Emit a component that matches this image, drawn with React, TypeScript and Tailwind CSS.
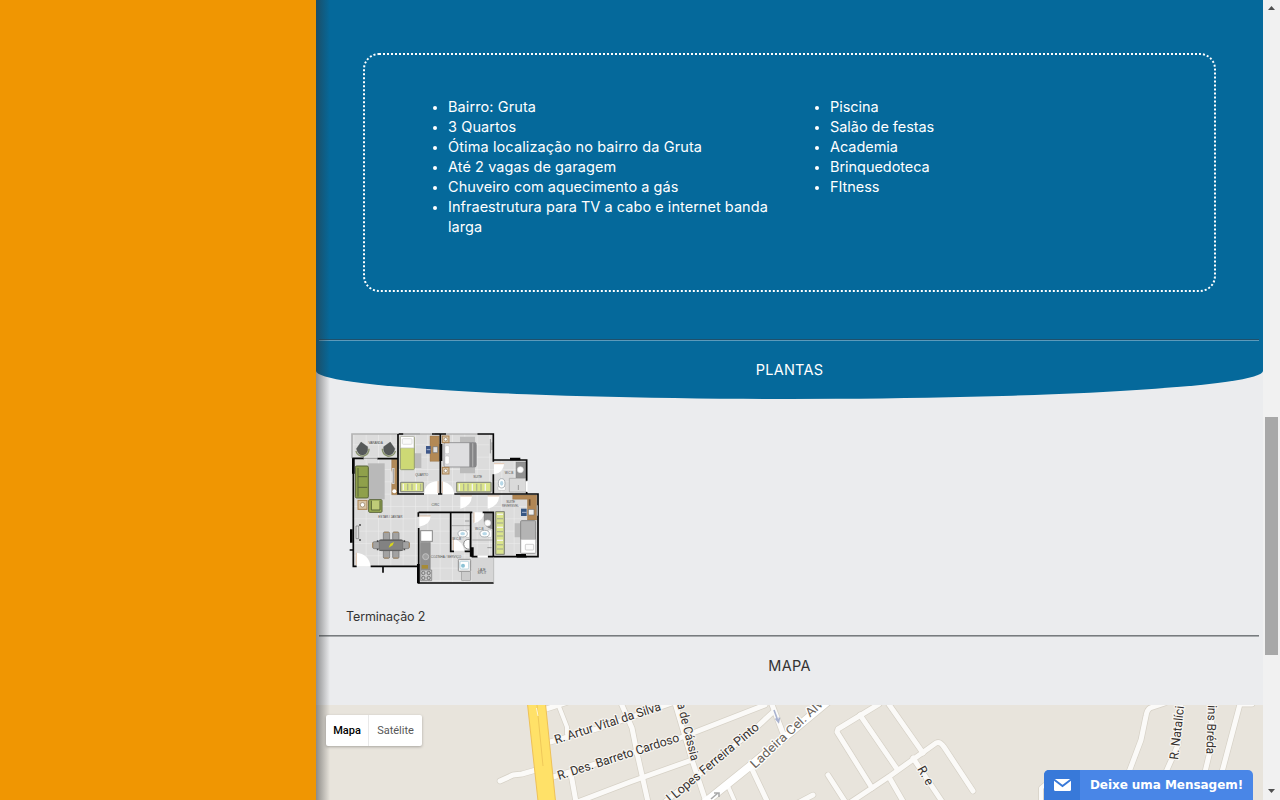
import React from "react";

const left = [
  { t: "Bairro: Gruta", w: "tracking-[0.1px]" },
  { t: "3 Quartos", w: "tracking-[0.1px]" },
  { t: "Ótima localização no bairro da Gruta", w: "tracking-[0.11px]" },
  { t: "Até 2 vagas de garagem", w: "tracking-[0.06px]" },
  { t: "Chuveiro com aquecimento a gás", w: "tracking-[0.04px]" },
  { t: "Infraestrutura para TV a cabo e internet banda larga", w: "tracking-[0.04px]" },
];
const right = ["Piscina", "Salão de festas", "Academia", "Brinquedoteca", "FItness"];

const roads: [string, number][] = [
  ["M546 709L568 702", 5],
  ["M558 704L567 727V734", 4],
  ["M550 742L600 728L672 703", 5],
  ["M553 777L680 738L765 705", 5],
  ["M500 781L513 775L522 774L536 770", 5],
  ["M571 774L576 802", 5],
  ["M575 803L630 782L692 760", 5],
  ["M621 703L632 728L637 753L648 802", 5],
  ["M675 703L692 760L706 802", 5],
  ["M660 806L758 726L773 712", 5],
  ["M771 702L784 736", 5],
  ["M750 765L768 803", 5],
  ["M728 786L735 802", 4],
  ["M879 704L838 729L837 732L872 788", 5],
  ["M860 715L897 769", 5],
  ["M888 703L923 753", 5],
  ["M851 802L890 776L936 743Q940 741 944 747L973 791", 5],
  ["M913 758L943 803", 5],
  ["M889 777L904 803", 5],
  ["M828 775L846 803", 5],
  ["M796 804L813 795", 5],
  ["M1165 703L1150 708Q1147 710 1146 716L1141 740L1129 772", 5],
  ["M1181 703L1178 745L1166 772", 5],
  ["M1212 703L1211 747L1205 772", 5],
  ["M1252 704H1240L1222 772", 5],
  ["M1041 803V788L1047 783", 4],
];

const labels: [string, number, number, number, number][] = [
  ["R. Artur Vital da Silva", 556, 744, -17.8, 111],
  ["R. Des. Barreto Cardoso", 559, 780, -17.8, 127],
  ["a de Cássia", 677, 704, 76, 59],
  ["l Lopes Ferreira Pinto", 671, 803, -40, 116],
  ["R. e", 917, 769, 60, 20],
  ["R. Natalíci", 1178, 760, -83.5, 54],
  ["ins Bréda", 1208, 705, 92, 49],
];

function StreetMap() {
  return (
    <svg className="block h-full w-full" viewBox="316 705 947 95">
      <rect x="316" y="705" width="947" height="95" fill="#e8e4dc" />
      <g fill="none" strokeLinejoin="round" strokeLinecap="round">
        {roads.map(([d, w]) => (
          <path key={d} d={d} stroke="#d6d1c6" strokeWidth={w + 1.4} />
        ))}
        <path d="M704 803L750 766L832 698" stroke="#d6d1c6" strokeWidth="9" />
        {roads.map(([d, w]) => (
          <path key={d} d={d} stroke="#fbfaf8" strokeWidth={w} />
        ))}
        <path d="M704 803L750 766L832 698" stroke="#fff" strokeWidth="7.5" />
      </g>
      <path d="M527.5 704H545.5L555.5 801H538Z" fill="#ffe168" stroke="#eec157" />
      <path d="M537 705L543 766" stroke="#efc85a" />
      <path d="M536.5 708L538 716" stroke="#fff7d8" />
      <path d="M774 710L778 721M775.5 718.500L778.500 722L779.500 717.500" stroke="#a9b2cf" strokeWidth="1.6" fill="none" />
      <path d="M711 799L718 793M714 793H719V797" stroke="#aaa" strokeWidth="1.6" fill="none" />
      <g fontFamily="Roboto, sans-serif" fontSize="12.500" paintOrder="stroke" stroke="#f7f5f1" strokeWidth="2.500" strokeLinejoin="round">
        {labels.map(([t, x, y, r, len]) => (
          <text key={t} transform={`translate(${x} ${y}) rotate(${r})`} textLength={len} lengthAdjust="spacingAndGlyphs" fill="#35302d">{t}</text>
        ))}
        <text transform="translate(755 769) rotate(-43)" textLength="94" lengthAdjust="spacingAndGlyphs" fill="#6b645c" stroke="#fff">Ladeira Cel. Alv</text>
      </g>
    </svg>
  );
}

function Chair({ x, y, r }: { x: number; y: number; r: number }) {
  return (
    <g transform={`translate(${x} ${y}) rotate(${r})`}>
      <path d="M-20 2Q-18 18 0 21Q18 18 20 2" fill="none" stroke="#86906a" strokeWidth="4" />
      <path d="M0-22L17-5Q16 16 0 17Q-16 16-17-5Z" fill="#555858" stroke="#3f4341" />
    </g>
  );
}

function Wardrobe({ x, y, w, h }: { x: number; y: number; w: number; h: number }) {
  const vertical = h > w;
  const n = Math.floor((vertical ? h : w) / 13);
  return (
    <g>
      <rect x={x} y={y} width={w} height={h} rx="2" fill="#dbe58c" stroke="#8d9082" strokeWidth="4" />
      {Array.from({ length: n }, (_, i) =>
        vertical ? (
          <path key={i} d={`M${x + 4} ${y + 8 + i * 13}h${w - 8}`} stroke={i % 3 ? "#b0b692" : "#f4f3ef"} strokeWidth="4" />
        ) : (
          <path key={i} d={`M${x + 8 + i * 13} ${y + 4}v${h - 8}`} stroke={i % 3 ? "#b0b692" : "#f4f3ef"} strokeWidth="4" />
        )
      )}
    </g>
  );
}

function Lamp({ x, y, s }: { x: number; y: number; s: number }) {
  return (
    <g>
      <rect x={x} y={y} width={s} height={s} fill="#d9c4a5" stroke="#a98252" strokeWidth="3" />
      <circle cx={x + s / 2} cy={y + s / 2} r={s / 4} fill="#fff" stroke="#8d7558" strokeWidth="2" />
    </g>
  );
}

function Toilet({ x, y, r }: { x: number; y: number; r: number }) {
  return (
    <g transform={`translate(${x} ${y}) rotate(${r})`}>
      <rect x="-11" y="6" width="22" height="12" rx="3" fill="#fff" stroke="#999" />
      <ellipse cx="0" cy="-3" rx="10" ry="14" fill="#fff" stroke="#8d9499" strokeWidth="2" />
      <ellipse cx="0" cy="-3" rx="5" ry="7" fill="#b7d8e8" />
    </g>
  );
}

function FloorPlan() {
  return (
    <svg className="block h-[170px] w-[210px]" viewBox="0 0 630 510">
      <defs>
        <pattern id="tile" width="37" height="37" patternUnits="userSpaceOnUse" x="40" y="24">
          <rect width="37" height="37" fill="#dcdcdc" />
          <path d="M0 0H37M0 0V37" stroke="#efefef" strokeWidth="3" />
        </pattern>
      </defs>
      <path d="M36 30H460V108H560V210H592V397H460V476H236V427H36Z" fill="url(#tile)" />
      <path d="M395 400H460V476H395Z" fill="#d6d6d6" />
      <path d="M36 103V30H176" fill="none" stroke="#b3b3b3" strokeWidth="5" />
      <path d="M176 30H240M285 30H300" stroke="#bbb" strokeWidth="4" />
      <path d="M84 118H134V226H84Z" fill="#b9b9b9" />
      <path d="M222 88H244V132H222ZM360 38H405V148H360ZM524 298H545V340H524Z" fill="#bbb" />

      <Chair x={67} y={76} r={-10} />
      <Chair x={147} y={76} r={10} />

      <g stroke="#576238" strokeWidth="3" fill="#8fa04b">
        <rect x="46" y="126" width="39" height="96" rx="4" />
        <path d="M54 132V218M54 158H82M54 190H82" />
        <rect x="86" y="227" width="40" height="38" rx="3" fill="#9cae55" />
        <path d="M94 230V258H120V230" fill="#bfcb78" />
      </g>
      <Lamp x={54} y={229} s={27} />
      <path d="M155 106H172V212H155V180L162 160L155 138Z" fill="#b18a59" stroke="#8d6b42" />
      <path d="M160 132V180" stroke="#e4e4e4" strokeWidth="7" />
      <path d="M160 134V178" stroke="#777" strokeWidth="2" />
      <circle cx="163" cy="202" r="6" fill="#fff" />

      <rect x="181" y="38" width="42" height="99" rx="3" fill="#cdd975" stroke="#949d73" strokeWidth="3" />
      <rect x="182" y="38" width="40" height="34" fill="#fff" stroke="#bbb" strokeWidth="2" />
      <rect x="187" y="44" width="29" height="17" rx="3" fill="#fafafa" stroke="#d0d0d0" strokeWidth="2" />
      <path d="M270 36H298V112H270Z" fill="#b38955" stroke="#8d6b42" />
      <path d="M279 68H293V86H279Z" fill="#dedede" stroke="#707070" strokeWidth="2" />
      <path d="M258 66H272V89H258Z" fill="#3e5789" />
      <path d="M260 77H271" stroke="#a8b6d2" strokeWidth="3" />
      <Wardrobe x={182} y={175} w={68} h={28} />
      <Wardrobe x={350} y={175} w={103} h={29} />

      <rect x="312" y="56" width="97" height="73" rx="5" fill="#dedee0" stroke="#969698" strokeWidth="3" />
      <rect x="388" y="56" width="20" height="73" fill="#858587" />
      <path d="M398 58V128" stroke="#aaa" strokeWidth="4" />
      <rect x="315" y="65" width="13" height="24" rx="4" fill="#fff" stroke="#aaa" />
      <rect x="315" y="96" width="13" height="24" rx="4" fill="#fff" stroke="#aaa" />
      <Lamp x={307} y={36} s={20} />
      <Lamp x={307} y={130} s={20} />
      <path d="M451 45V88M456 55V78" stroke="#999" strokeWidth="3" />

      <rect x="528" y="114" width="31" height="48" fill="#929292" stroke="#707070" />
      <circle cx="541" cy="137" r="9" fill="#fff" stroke="#ddd" strokeWidth="2" />
      <Toilet x={485} y={181} r={0} />
      <path d="M508 204V163H558V204Z" fill="#dadada" stroke="#a0a0a0" strokeWidth="2" />
      <path d="M535 183V198" stroke="#999" strokeWidth="3" />

      <path d="M518 213H590V288H562V226H518Z" fill="#b18654" stroke="#886640" />
      <path d="M569 226V245" stroke="#62492e" strokeWidth="5" />
      <rect x="565" y="256" width="17" height="17" fill="#eee" stroke="#777" strokeWidth="2" />
      <rect x="543" y="254" width="17" height="22" fill="#375783" />
      <path d="M546 265H560" stroke="#a8b6d2" strokeWidth="3" />
      <rect x="542" y="290" width="45" height="98" rx="3" fill="#b4b4b4" stroke="#8a8a8a" strokeWidth="3" />
      <rect x="543" y="347" width="43" height="40" fill="#fff" stroke="#c5c5c5" strokeWidth="2" />
      <rect x="556" y="361" width="25" height="17" rx="2" fill="#fafafa" stroke="#bbb" strokeWidth="2" />
      <Wardrobe x={467} y={263} w={26} h={128} />

      <path d="M432 266H458V315Q432 310 432 290Z" fill="#929292" stroke="#777" />
      <circle cx="443" cy="297" r="9" fill="#fff" stroke="#ddd" strokeWidth="2" />
      <Toilet x={437} y={329} r={-90} />
      <Toilet x={371} y={329} r={-90} />
      <path d="M390 346Q371 345 371 361Q373 376 390 376Z" fill="#fff" stroke="#8b8b8b" strokeWidth="3" />
      <path d="M335 305H390M397 348H458" stroke="#aaa" strokeWidth="3" />
      <path d="M375 291H388M442 371H455" stroke="#999" strokeWidth="3" />

      <g stroke="#6d6d6d" strokeWidth="2" fill="#a2a2a2">
        <rect x="130" y="324" width="19" height="25" rx="4" /><rect x="158" y="324" width="19" height="25" rx="4" />
        <rect x="130" y="377" width="19" height="26" rx="4" /><rect x="158" y="377" width="19" height="26" rx="4" />
        <rect x="98" y="353" width="24" height="21" rx="5" /><rect x="184" y="353" width="24" height="21" rx="5" />
        <rect x="118" y="347" width="70" height="33" rx="5" fill="#828282" />
      </g>
      <path d="M132 325H146M160 325H175M132 402H146M160 402H175M98 356V371M208 356V371" stroke="#aa8c64" strokeWidth="3" />
      <path d="M118 349H188M118 379H188" stroke="#5c5c5c" strokeWidth="3" />
      <path d="M113 349V354M113 374V379M193 349V354M193 374V379" stroke="#444" strokeWidth="5" />
      <path d="M146 371L151 359L162 354L158 364Z" fill="#d8d51d" />
      <path d="M48 306H56V344H48Z" fill="#ddd" stroke="#777" strokeWidth="2" />
      <path d="M60 300V306M60 345V351" stroke="#333" strokeWidth="4" />

      <rect x="242" y="320" width="35" height="32" fill="#fff" stroke="#888" strokeWidth="3" />
      <path d="M241 355H271V437H241Z" fill="#8f8f8f" stroke="#6f6f6f" />
      <circle cx="257" cy="398" r="9" fill="#a2a2a2" stroke="#c2c2c2" strokeWidth="3" />
      <path d="M245 423H264V434H245Z" fill="#a68b36" />
      <path d="M242 438H275V470H242Z" fill="#c7c7c7" stroke="#777" strokeWidth="2" />
      <g fill="none" stroke="#777" strokeWidth="3">
        <circle cx="250" cy="447" r="5" /><circle cx="266" cy="447" r="5" /><circle cx="250" cy="462" r="5" /><circle cx="266" cy="462" r="5" />
      </g>
      <rect x="355" y="406" width="37" height="36" rx="3" fill="#eee" stroke="#8e8e8e" strokeWidth="3" />
      <rect x="360" y="412" width="26" height="23" rx="4" fill="#fff" stroke="#9dc6d3" strokeWidth="2" />
      <circle cx="369" cy="425" r="6" fill="#8cc3d6" />
      <rect x="365" y="443" width="26" height="26" fill="#ccc" stroke="#999" strokeWidth="2" />

      <g fill="#fff">
        <path d="M49 427V386Q86 389 92 427Z" />
        <path d="M253 210Q254 174 294 171V210Z" />
        <path d="M307 210V172Q340 180 343 210Z" />
        <path d="M361 254V216H396Q394 248 361 254Z" />
        <path d="M443 254V216H478Q475 248 443 254Z" />
        <path d="M462 151V117H493Q490 147 462 151Z" />
        <path d="M238 308V276H272Q271 302 238 308Z" />
        <path d="M402 298V265H433Q430 291 402 298Z" />
        <path d="M340 380V345Q370 352 373 380Z" />
      </g>
      <path d="M49 386V423M294 171V207M307 172V207M361 216H396M443 216H478M462 119H493M238 276H272M402 265V296M340 345V378" stroke="#d0a684" strokeWidth="2" />

      <g stroke="#080808" strokeWidth="5" fill="none">
        <path d="M37 103H72M112 104H176M40 103V427H50M92 427H236M174 30V210H252M176 30H190M276 30H301V171M301 30V210M294 210H307M301 30H318M412 30H460V113M460 108H560V170M560 204V210M460 151V208M343 210H594V398H530" />
        <path d="M236 265H332M332 265H397M332 265V382H342M374 382H392M392 265V398M428 265H460V398M235 265V278M236 312V477H461M395 398H413M444 398H560M129 427V446M29 378H40" />
      </g>
      <path d="M70 103H112M191 30H276M318 30H412M413 398H443" stroke="#9b9b9b" strokeWidth="3" />
      <path d="M413 398H443M560 173V202" stroke="#fff" strokeWidth="5" />
      <path d="M40 103V149M34 316V356M303 60V111M397 370V398M510 105H541M528 394H558M235 420V478" stroke="#050505" strokeWidth="8" />
      <path d="M461 400V476" stroke="#aaa" strokeWidth="2" />
      <path d="M592 244V275" stroke="#999" strokeWidth="4" />

      <g fontFamily="Liberation Sans, sans-serif" fontSize="9.500" fill="#4c4c4c" textAnchor="middle">
        <text x="107" y="59" textLength="43">VARANDA</text>
        <text x="245" y="156" textLength="39">QUARTO</text>
        <text x="413" y="161" textLength="27">SUITE</text>
        <text x="507" y="151" textLength="26">W.C.B</text>
        <text x="286" y="245" textLength="23">CIRC</text>
        <text x="512" y="237" textLength="27">SUITE</text>
        <text x="511" y="248" textLength="50" lengthAdjust="spacingAndGlyphs">REVERSÍVEL</text>
        <text x="151" y="283" textLength="72" lengthAdjust="spacingAndGlyphs">ESTAR / JANTAR</text>
        <text x="418" y="317" textLength="26">W.C.B</text>
        <text x="350" y="347" textLength="26">W.C.B</text>
        <text x="318" y="402" textLength="91" lengthAdjust="spacingAndGlyphs">COZINHA / SERVIÇO</text>
        <text x="426" y="440" textLength="22">LAJE</text>
        <text x="426" y="451" textLength="27">SPLIT</text>
      </g>
    </svg>
  );
}

export default function App() {
  return (
    <div className="flex h-[800px] w-[1280px] overflow-hidden bg-[#f1f1f1] font-['Inter',sans-serif]">
      <aside className="w-[316px] shrink-0 bg-[#f09602]" />
      <main className="relative flex w-[947px] shrink-0 flex-col bg-[#ebecee]">
        <section className="flex h-[399px] shrink-0 flex-col rounded-b-[50%_28px] bg-[#05699b] pt-[53px] text-[14.5px] leading-5 text-white">
          <div className="mx-[47px] flex h-[239px] shrink-0 rounded-[16px] border-2 border-dotted border-white pt-[42px] pl-[83px]">
            <ul className="w-[382px] list-disc pr-[50px] marker:text-[12px]">
              {left.map((i) => (
                <li key={i.t} className={i.w}>{i.t}</li>
              ))}
            </ul>
            <ul className="list-disc tracking-[-0.05px] marker:text-[12px]">
              {right.map((i) => (
                <li key={i}>{i}</li>
              ))}
            </ul>
          </div>
          <hr className="mt-[47px] mr-1 ml-[3px] h-[2px] shrink-0 border-t border-b border-t-[#1f506b] border-b-[#5c9abb]" />
          <h2 className="mt-[19px] text-center tracking-[0.25px]">PLANTAS</h2>
        </section>
        <section className="flex h-[236px] shrink-0 flex-col pt-[25px] pl-6">
          <FloorPlan />
          <p className="mt-[13px] pl-[6px] text-[12.5px] leading-5 tracking-[-0.1px] text-[#333]">Terminação 2</p>
        </section>
        <hr className="mr-1 ml-[3px] h-[2px] shrink-0 border-t border-b border-t-[#777b7e] border-b-[#a8abad]" />
        <h2 className="h-[68px] shrink-0 pt-[19px] text-center text-[14.5px] leading-5 tracking-[0.3px] text-[#333]">MAPA</h2>
        <div className="h-[95px] shrink-0">
          <StreetMap />
        </div>
        <div className="pointer-events-none absolute inset-y-0 left-0 w-[14px] bg-linear-to-r from-[#33333380] via-[#33333340] to-transparent" />
        <div className="absolute top-[715px] left-[10px] flex h-[31px] w-[96px] rounded-[2px] bg-white font-['Roboto',sans-serif] text-[11px] leading-[31px] shadow-[0_1px_3px_rgba(0,0,0,0.28)]">
          <span className="w-[43px] border-r border-[#e9e9e9] text-center font-medium text-black">Mapa</span>
          <span className="flex-1 text-center text-[#565656]">Satélite</span>
        </div>
        <div className="absolute right-[10px] bottom-0 flex h-[30px] w-[209px] overflow-hidden rounded-t-[5px] bg-[#4986e7] font-['DejaVu_Sans',sans-serif] text-[12px] font-bold text-white">
          <div className="flex w-9 items-center justify-center bg-[#3879d9]">
            <svg viewBox="0 0 17 12" className="h-3 w-[17px]">
              <rect width="17" height="12" rx="1.500" fill="#fff" />
              <path d="M0 0.500L8.500 7L17 0.500" fill="none" stroke="#3879d9" strokeWidth="1.800" />
            </svg>
          </div>
          <span className="flex-1 text-center leading-[30px] tracking-[-0.05px] whitespace-nowrap">Deixe uma Mensagem!</span>
        </div>
      </main>
      <div className="flex w-[17px] shrink-0 flex-col items-center bg-[#f1f1f1]">
        <svg viewBox="0 0 17 17" className="size-[17px]"><path d="M5 10L8.500 6L12 10Z" fill="#505050" /></svg>
        <div className="mt-[400px] h-[238px] w-[13px] bg-[#a8a8a8]" />
        <svg viewBox="0 0 17 17" className="mt-auto size-[17px]"><path d="M5 6L8.500 10L12 6Z" fill="#505050" /></svg>
      </div>
    </div>
  );
}
